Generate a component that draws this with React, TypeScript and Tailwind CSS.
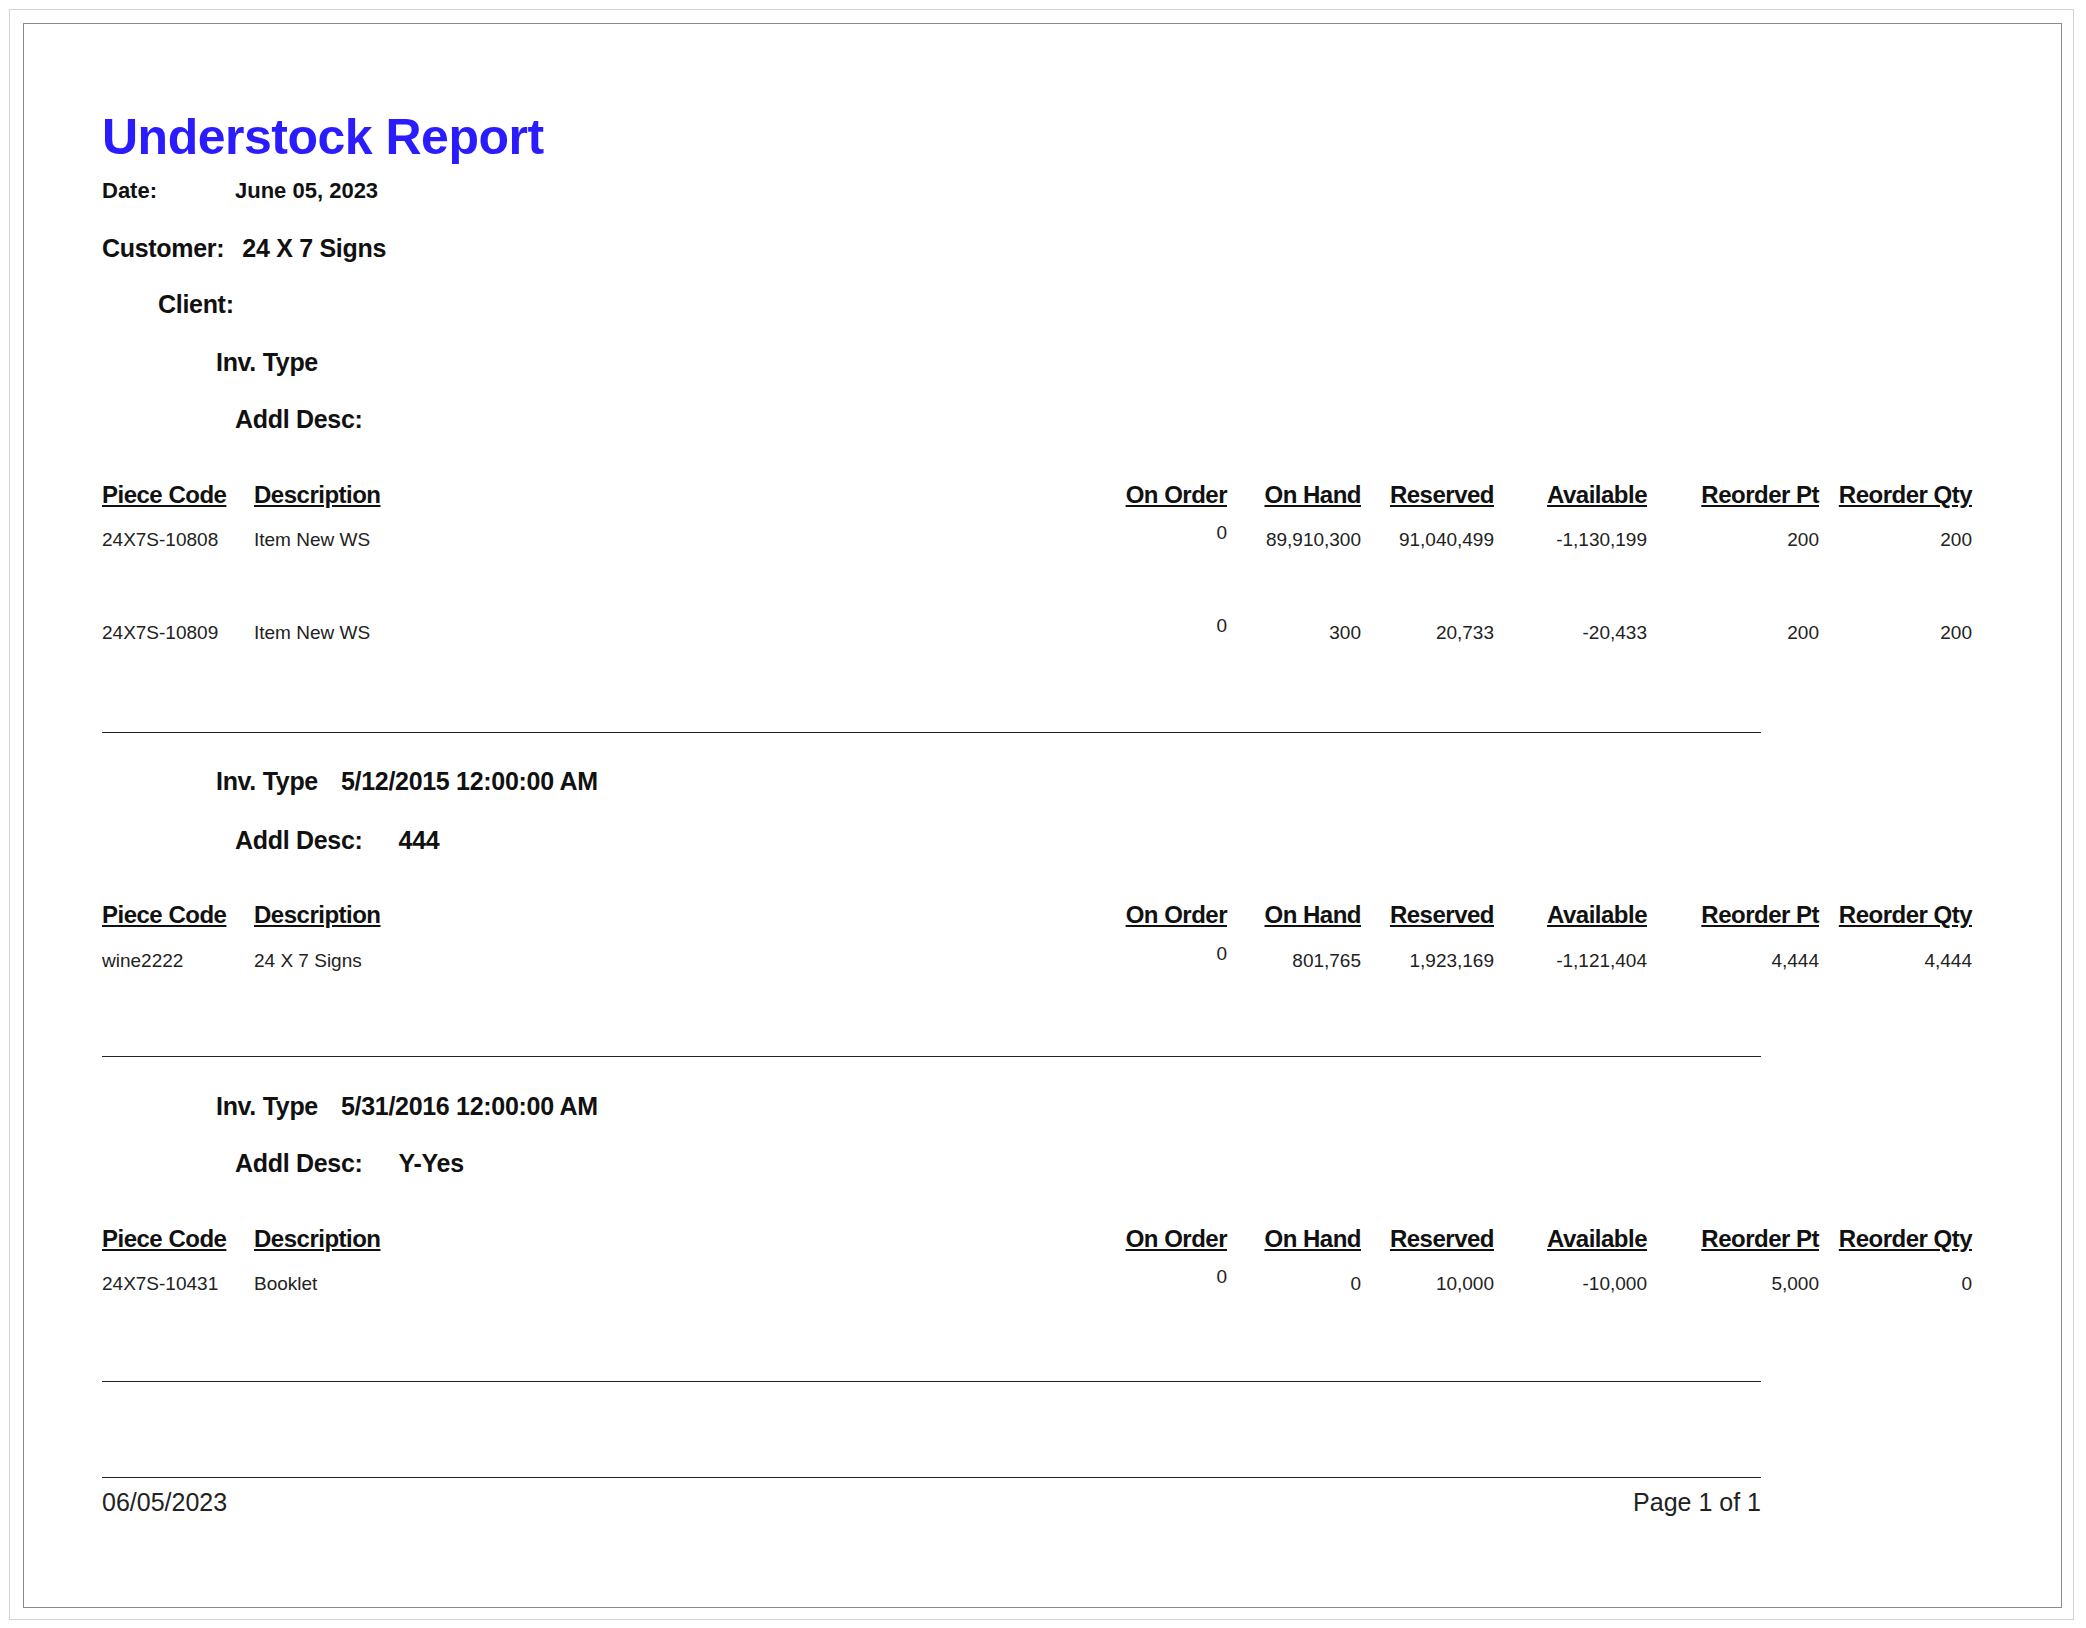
const cols = "grid grid-cols-[152px_853px_120px_134px_133px_153px_172px_153px] w-[1870px]";

type Row = { code: string; desc: string; vals: string[] };

function Header({ mt }: { mt: string }) {
  const heads = ["On Order", "On Hand", "Reserved", "Available", "Reorder Pt", "Reorder Qty"];
  return (
    <div className={`${cols} ${mt} h-10 items-center text-[24px] font-bold underline tracking-[-0.5px] text-[#111]`}>
      <div>Piece Code</div>
      <div>Description</div>
      {heads.map((h) => (
        <div key={h} className="text-right whitespace-nowrap">{h}</div>
      ))}
    </div>
  );
}

function DataRow({ row, mt }: { row: Row; mt: string }) {
  return (
    <div className={`${cols} ${mt} h-10 items-center text-[19px] text-[#222]`}>
      <div>{row.code}</div>
      <div>{row.desc}</div>
      <div className="text-right -translate-y-[7px]">0</div>
      {row.vals.map((v, i) => (
        <div key={i} className="text-right">{v}</div>
      ))}
    </div>
  );
}

function Label({ label, value, indent, mt, gap }: { label: string; value?: string; indent: string; mt: string; gap: string }) {
  return (
    <div className={`flex h-10 items-center text-[25px] font-bold text-[#111] tracking-[-0.3px] ${indent} ${mt}`}>
      <span className={gap}>{label}</span>
      {value && <span>{value}</span>}
    </div>
  );
}

export default function App() {
  return (
    <div className="w-[2086px] h-[1628px] bg-white pt-[9px] pl-[9px]" style={{ fontFamily: '"Liberation Sans", Arial, sans-serif' }}>
      <div className="w-[2065px] h-[1611px] border border-[#d4d4d4] pt-[13px] pl-[13px]">
        <div className="w-[2039px] h-[1585px] border border-[#8a8a8a] pl-[78px]">
          <div className="mt-[83px] h-[60px] flex items-center text-[50px] font-bold text-[#2a1cff] tracking-[-0.5px]">
            Understock Report
          </div>
          <div className="mt-[3px] flex h-10 items-center text-[22px] font-bold text-[#111]">
            <span className="w-[133px]">Date:</span>
            <span>June 05, 2023</span>
          </div>
          <Label label="Customer:" value="24 X 7 Signs" indent="" mt="mt-[19px]" gap="mr-[18px]" />
          <Label label="Client:" indent="pl-[56px]" mt="mt-[16px]" gap="" />
          <Label label="Inv. Type" indent="pl-[114px]" mt="mt-[18px]" gap="" />
          <Label label="Addl Desc:" indent="pl-[133px]" mt="mt-[17px]" gap="" />
          <Header mt="mt-[35px]" />
          <DataRow mt="mt-[5px]" row={{ code: "24X7S-10808", desc: "Item New WS", vals: ["89,910,300", "91,040,499", "-1,130,199", "200", "200"] }} />
          <DataRow mt="mt-[53px]" row={{ code: "24X7S-10809", desc: "Item New WS", vals: ["300", "20,733", "-20,433", "200", "200"] }} />
          <div className="mt-[79px] w-[1659px] h-px bg-[#222]" />

          <Label label="Inv. Type" value="5/12/2015 12:00:00 AM" indent="pl-[114px]" mt="mt-[29px]" gap="mr-[23px]" />
          <Label label="Addl Desc:" value="444" indent="pl-[133px]" mt="mt-[19px]" gap="mr-[36px]" />
          <Header mt="mt-[34px]" />
          <DataRow mt="mt-[6px]" row={{ code: "wine2222", desc: "24 X 7 Signs", vals: ["801,765", "1,923,169", "-1,121,404", "4,444", "4,444"] }} />
          <div className="mt-[75px] w-[1659px] h-px bg-[#222]" />

          <Label label="Inv. Type" value="5/31/2016 12:00:00 AM" indent="pl-[114px]" mt="mt-[30px]" gap="mr-[23px]" />
          <Label label="Addl Desc:" value="Y-Yes" indent="pl-[133px]" mt="mt-[17px]" gap="mr-[36px]" />
          <Header mt="mt-[35px]" />
          <DataRow mt="mt-[5px]" row={{ code: "24X7S-10431", desc: "Booklet", vals: ["0", "10,000", "-10,000", "5,000", "0"] }} />
          <div className="mt-[77px] w-[1659px] h-px bg-[#222]" />

          <div className="mt-[95px] w-[1659px] h-px bg-[#222]" />
          <div className="mt-[5px] w-[1659px] h-10 flex items-center justify-between text-[25px] text-[#222]">
            <span>06/05/2023</span>
            <span>Page 1 of 1</span>
          </div>
        </div>
      </div>
    </div>
  );
}
